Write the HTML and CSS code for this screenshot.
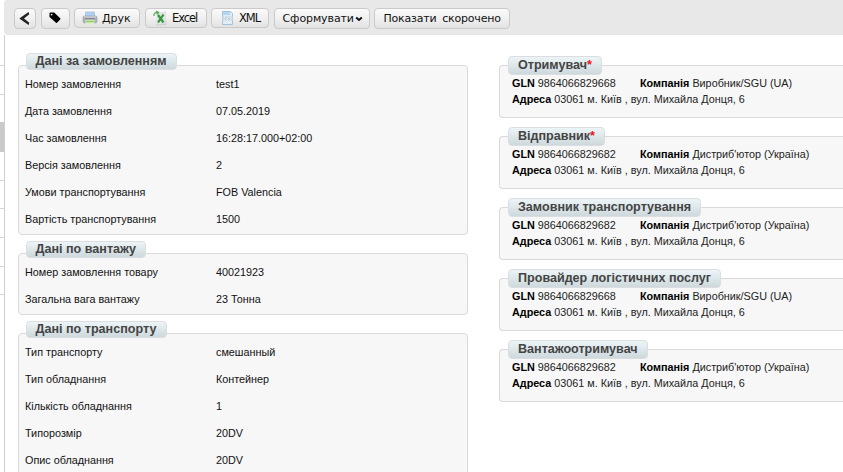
FILE: index.html
```
<!DOCTYPE html>
<html lang="uk">
<head>
<meta charset="utf-8">
<title>Замовлення</title>
<link rel="stylesheet" href="styles.css">
</head>
<body>
<div class="page">
  <aside class="rail"><i class="r1"></i><i class="r2"></i><i class="active"></i><i class="r3"></i><i class="r3"></i><i class="r2"></i><i class="r2"></i><i class="r3"></i></aside>
  <div class="main">
    <nav class="toolbar">
      <button class="btn back"><svg width="14" height="15" viewBox="0 0 14 15"><path d="M10.500 1 1.300 7.500 10.500 14 11.300 11.800 6 7.500 11.300 3.200Z" fill="#222"/></svg></button>
      <button class="btn tag"><svg width="12" height="12" viewBox="0 0 12 12"><path d="M.5 1.300Q.5.500 1.300.5H5.200L11.200 6.300Q11.700 6.900 11.200 7.400L8 10.700Q7.500 11.200 7 10.700L.5 5Z" fill="#000"/><circle cx="2.600" cy="2.600" r=".9" fill="#eee"/></svg></button>
      <button class="btn short print"><svg width="16" height="16" viewBox="0 0 16 16"><path d="M3.500 2h9v5h-9z" fill="#aed0f7" stroke="#b3c5da"/><rect x="1" y="6" width="14" height="7" rx="1.500" fill="#aeb1b7" stroke="#999da4" stroke-width=".6"/><path d="M2 7h12" stroke="#d8dadd"/><path d="M3 8.500h10" stroke="#858990"/><path d="M3.500 10h9v4.500h-9z" fill="#dff0d0"/><path d="M4 11.500h8" stroke="#93d062" stroke-width="1.800"/></svg><span>Друк</span></button>
      <button class="btn short excel"><svg width="16" height="16" viewBox="0 0 16 16"><path d="M5 2.500 14 1.500V14.500L4 15Z" fill="#dfe3e4"/><path d="M4 15 14 14.500V11" fill="none" stroke="#c8cdd0"/><path d="M6 5 11.500 12.500M11.500 4.500 6 12.500" stroke="#35983a" stroke-width="2.200"/><path d="M2 6Q1.500 2.500 5.500 2.500M4 1 6.500 2.400 5 4.300" fill="none" stroke="#5aab5a" stroke-width="1.300"/></svg><span>Excel</span></button>
      <button class="btn short xml"><svg width="16" height="16" viewBox="0 0 16 16"><path d="M3.500 1.500h8l2 2v11h-10z" fill="#e3edf5" stroke="#9fc2dd"/><path d="M4 2h7v3H4z" fill="#b4d7ef"/><path d="M3 6.500h11v4H3z" fill="#c6d3df"/><path d="m6 7-1.500 1.500L6 10m5-3 1.500 1.500L11 10M9.500 7 7.500 10" fill="none" stroke="#eef3f7"/></svg><span>XML</span></button>
      <button class="btn form"><span>Сформувати</span><svg width="8" height="6" viewBox="0 0 8 6"><path d="M1.200 1.500 4 4l2.800-2.500" fill="none" stroke="#111" stroke-width="2"/></svg></button>
      <button class="btn brief"><span>Показати скорочено</span></button>
    </nav>
    <div class="columns">
      <div class="details">
        <section class="panel"><h2 class="legend">Дані за замовленням</h2>
          <dl><dt>Номер замовлення</dt><dd>test1</dd><dt>Дата замовлення</dt><dd>07.05.2019</dd><dt>Час замовлення</dt><dd>16:28:17.000+02:00</dd><dt>Версія замовлення</dt><dd>2</dd><dt>Умови транспортування</dt><dd>FOB Valencia</dd><dt>Вартість транспортування</dt><dd>1500</dd></dl></section>
        <section class="panel"><h2 class="legend">Дані по вантажу</h2>
          <dl><dt>Номер замовлення товару</dt><dd>40021923</dd><dt>Загальна вага вантажу</dt><dd>23 Тонна</dd></dl></section>
        <section class="panel"><h2 class="legend">Дані по транспорту</h2>
          <dl><dt>Тип транспорту</dt><dd>смешанный</dd><dt>Тип обладнання</dt><dd>Контейнер</dd><dt>Кількість обладнання</dt><dd>1</dd><dt>Типорозмір</dt><dd>20DV</dd><dt>Опис обладнання</dt><dd>20DV</dd></dl></section>
      </div>
      <div class="parties">
        <section class="panel party"><h2 class="legend">Отримувач<em>*</em></h2>
          <p><span class="gln"><b>GLN</b> 9864066829668</span><span><b>Компанія</b> Виробник/SGU (UA)</span></p><p><b>Адреса</b> 03061 м. Київ , вул. Михайла Донця, 6</p></section>
        <section class="panel party"><h2 class="legend">Відправник<em>*</em></h2>
          <p><span class="gln"><b>GLN</b> 9864066829682</span><span><b>Компанія</b> Дистриб'ютор (Україна)</span></p><p><b>Адреса</b> 03061 м. Київ , вул. Михайла Донця, 6</p></section>
        <section class="panel party"><h2 class="legend">Замовник транспортування</h2>
          <p><span class="gln"><b>GLN</b> 9864066829682</span><span><b>Компанія</b> Дистриб'ютор (Україна)</span></p><p><b>Адреса</b> 03061 м. Київ , вул. Михайла Донця, 6</p></section>
        <section class="panel party"><h2 class="legend">Провайдер логістичних послуг</h2>
          <p><span class="gln"><b>GLN</b> 9864066829668</span><span><b>Компанія</b> Виробник/SGU (UA)</span></p><p><b>Адреса</b> 03061 м. Київ , вул. Михайла Донця, 6</p></section>
        <section class="panel party"><h2 class="legend">Вантажоотримувач</h2>
          <p><span class="gln"><b>GLN</b> 9864066829682</span><span><b>Компанія</b> Дистриб'ютор (Україна)</span></p><p><b>Адреса</b> 03061 м. Київ , вул. Михайла Донця, 6</p></section>
      </div>
    </div>
  </div>
</div>
</body>
</html>
```
FILE: styles.css
```
* { box-sizing: border-box; }
body { margin: 0; background: #fff; color: #111; font: 10.8px "Liberation Sans", Arial, sans-serif; }
h2, p, dl, dd { margin: 0; }
.page { display: flex; width: 843px; height: 472px; overflow: hidden; }

.rail { flex: none; width: 4px; }
.rail i { display: block; height: 29px; border-bottom: 1px solid #d5d5d5; }
.rail .r1 { height: 66px; }
.rail .r3 { height: 28px; }
.rail .active { height: 57px; border-bottom: 0; background: linear-gradient(transparent 27px, #c9c9c9 27px); }
.rail .active + .r3 { height: 29px; }

.main { flex: 1; min-width: 0; background: linear-gradient(#d0d0d0, #d0d0d0) 0 35px / 1px 100% no-repeat; }

.toolbar { display: flex; align-items: flex-start; height: 35px; padding: 8px 0 0 10px; background: #e8e8e8; border-radius: 3px 0 0 4px; }
.btn { flex: none; display: flex; align-items: center; height: 21px; margin: 0 4px 0 0; padding: 0; border: 1px solid #cacaca; border-radius: 4px; background: linear-gradient(#fbfbfb, #f0f0f0 50%, #e2e2e2); color: #111; font: 11px "DejaVu Sans", sans-serif; white-space: nowrap; }
.btn.short { height: 20px; }
.back { width: 22px; justify-content: center; margin-right: 5px; }
.tag { width: 29px; justify-content: center; }
.tag svg { margin: -2px 2px 0 0; }
.print { width: 66px; padding-left: 7px; gap: 4px; margin-right: 5px; }
.excel { width: 62px; padding-left: 6px; gap: 4px; }
.excel span, .xml span { letter-spacing: -1.05px; font-size: 11.5px; }
.xml { width: 58px; padding-left: 7px; gap: 4px; margin-right: 5px; }
.form { width: 96px; padding-left: 7.5px; gap: 1px; }
.form span { letter-spacing: -0.1px; }
.brief { width: 136px; padding-left: 8.5px; }
.brief span { letter-spacing: -0.2px; word-spacing: 2.5px; }

.columns { display: flex; gap: 31px; padding: 30px 0 0 14px; }
.details, .parties { display: flex; flex-direction: column; gap: 18px; }
.details { flex: none; width: 450px; }
.parties { flex: 1; }

.panel { position: relative; padding: 5px 6px 1px; border: 1px solid #dadada; border-radius: 4px; background: #f7f7f7; }
.legend { position: absolute; left: 7px; top: -13px; height: 17px; padding: 0 9.5px 0 8.5px; border: 1px solid #dadee0; border-radius: 4px; background: linear-gradient(#ecf4f6, #ced9dd); color: #444; font-size: 12.57px; line-height: 15px; white-space: nowrap; }
.legend em { color: #e11; font-style: normal; }

dl { display: grid; grid-template-columns: 191px 1fr; line-height: 27px; }

.party { height: 53px; padding: 9px 0 0 12px; border-right: 0; border-radius: 4px 0 0 4px; line-height: 16px; color: #222; }
.party .legend { left: 8px; top: -10px; height: 19px; padding: 0 9px; line-height: 17px; }
.party p { display: flex; white-space: pre; }
.party b { color: #000; }
.gln { width: 128px; }
```
